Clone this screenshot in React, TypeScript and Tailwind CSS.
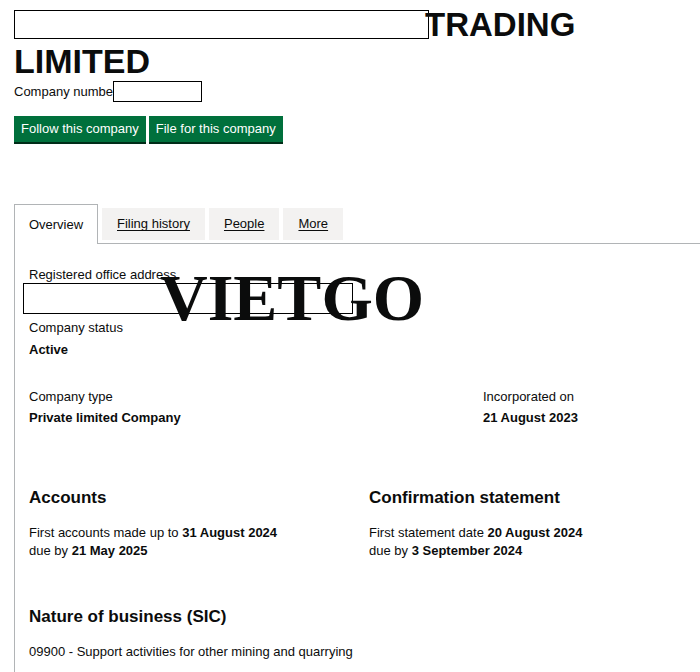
export default function App() {
  const tabs = ["Filing history", "People", "More"];

  return (
    <main className="min-h-[672px] overflow-hidden bg-white pl-[14px] text-[#0b0c0c] font-['Liberation_Sans',Arial,sans-serif]">
      <header className="pt-[6px]">
        <h1 className="text-[34px] font-bold leading-[37px]">
          <div className="flex items-end">
            <span className="mb-[4px] h-[29px] w-[415px] border border-black" />
            <span className="-ml-[4px] text-[33px]">TRADING</span>
          </div>
          <div>LIMITED</div>
        </h1>
        <div className="mt-[1px] flex h-[21px] items-center text-[13px]">
          <span>Company numbe</span>
          <span className="h-[21px] w-[89px] border border-black" />
        </div>
        <div className="mt-[14px] flex gap-[3px]">
          <button
            type="button"
            className="h-[26px] bg-[#00703c] px-[7px] text-[13px] text-white shadow-[0_2px_0_#002d18]"
          >
            Follow this company
          </button>
          <button
            type="button"
            className="h-[26px] bg-[#00703c] px-[7px] text-[13px] text-white shadow-[0_2px_0_#002d18]"
          >
            File for this company
          </button>
        </div>
      </header>

      <nav className="mt-[62px] flex items-end">
        <div className="flex h-[40px] w-[84px] items-center justify-center border border-b-0 border-[#b1b4b6] bg-white text-[13px]">
          Overview
        </div>
        <div className="flex flex-1 items-end gap-[4px] border-b border-[#b1b4b6] pb-[3px] pl-[4px]">
          {tabs.map((t) => (
            <a
              key={t}
              href="#"
              className="flex h-[32px] items-center bg-[#f3f2f1] px-[15px] text-[13px] underline underline-offset-2"
            >
              {t}
            </a>
          ))}
        </div>
      </nav>

      <section className="relative border-l border-[#b1b4b6] pb-[20px] pl-[14px] pt-[23px] text-[13px] leading-[16px]">
        <div>Registered office address</div>
        <div className="-ml-[6px] h-[31px] w-[330px] border border-black" />
        <span className="pointer-events-none absolute left-[145px] top-[21px] font-['Liberation_Serif','Times_New_Roman',serif] text-[66px] font-bold leading-none">
          VIETGO
        </span>

        <div className="mt-[6px]">Company status</div>
        <div className="mt-[6px] font-bold">Active</div>

        <div className="mt-[31px] flex">
          <div className="w-[454px]">
            <div>Company type</div>
            <div className="mt-[5px] font-bold">Private limited Company</div>
          </div>
          <div>
            <div>Incorporated on</div>
            <div className="mt-[5px] font-bold">21 August 2023</div>
          </div>
        </div>

        <div className="mt-[61px] flex">
          <div className="w-[340px]">
            <h2 className="text-[17px] font-bold leading-[22px]">Accounts</h2>
            <p className="mt-[15px] leading-[18px]">
              First accounts made up to <b>31 August 2024</b>
              <br />
              due by <b>21 May 2025</b>
            </p>
          </div>
          <div>
            <h2 className="text-[17px] font-bold leading-[22px]">Confirmation statement</h2>
            <p className="mt-[15px] leading-[18px]">
              First statement date <b>20 August 2024</b>
              <br />
              due by <b>3 September 2024</b>
            </p>
          </div>
        </div>

        <h2 className="mt-[46px] text-[17px] font-bold leading-[22px]">Nature of business (SIC)</h2>
        <p className="mt-[16px]">09900 - Support activities for other mining and quarrying</p>
      </section>
    </main>
  );
}
